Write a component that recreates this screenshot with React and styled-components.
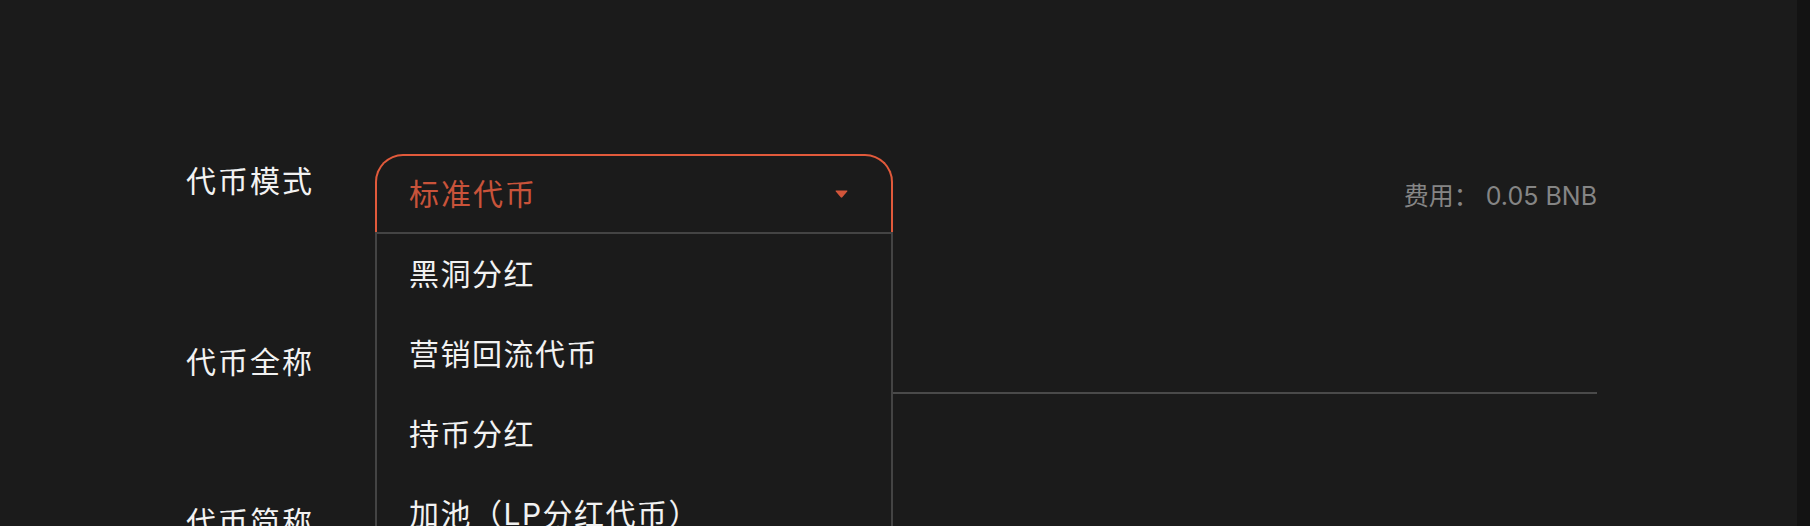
import styled, { createGlobalStyle } from "styled-components";

const GlobalStyle = createGlobalStyle`
  html, body {
    margin: 0;
    padding: 0;
    background: #1b1b1b;
    overflow: hidden;
  }
  body {
    font-family: "Inter", "Noto Sans CJK SC", sans-serif;
  }
`;

const Page = styled.div`
  display: flex;
  width: 1810px;
  height: 526px;
  overflow: hidden;
`;

const Main = styled.div`
  flex: 1;
  padding: 154px 0 0 186px;
  box-sizing: border-box;
`;

const ScrollTrack = styled.div`
  width: 13px;
  background: #131313;
`;

const Form = styled.div`
  width: 1411px;
  display: flex;
  flex-direction: column;
  gap: 101px;
`;

const Row = styled.div`
  display: flex;
  align-items: flex-start;
  height: ${(props) => props.height}px;
`;

const Label = styled.div`
  width: 189px;
  flex-shrink: 0;
  font-size: 30px;
  letter-spacing: 2px;
  line-height: 54px;
  color: #f2f2f2;
`;

const SelectWrap = styled.div`
  position: relative;
  width: 518px;
  flex-shrink: 0;
`;

const SelectBox = styled.div`
  height: 78px;
  box-sizing: border-box;
  border: 2px solid #e25a3b;
  border-bottom: none;
  border-radius: 28px 28px 0 0;
  padding: 0 43px 4px 32px;
  display: flex;
  align-items: center;
  justify-content: space-between;
  color: #c9533a;
  font-size: 30px;
  letter-spacing: 2px;

  svg {
    margin-top: 4px;
  }
`;

const Menu = styled.ul`
  position: absolute;
  top: 78px;
  left: 0;
  width: 518px;
  box-sizing: border-box;
  margin: 0;
  padding: 0;
  list-style: none;
  border: 2px solid #444;
  border-bottom: none;
  background: #1b1b1b;
  z-index: 2;
`;

const MenuItem = styled.li`
  height: 80px;
  box-sizing: border-box;
  padding: 0 0 4px 32px;
  display: flex;
  align-items: center;
  font-size: 30px;
  letter-spacing: 1.5px;
  color: #f2f2f2;
`;

const Fee = styled.div`
  margin-left: auto;
  height: 80px;
  display: flex;
  align-items: center;
  font-size: 25px;
  color: #858585;
`;

const Input = styled.div`
  flex: 1;
  height: 59px;
  box-sizing: border-box;
  border-bottom: 2px solid #4a4a4a;
`;

const Caret = () => (
  <svg width="13" height="8" viewBox="0 0 13 8">
    <path d="M1.2 0.4 H11.8 Q12.9 0.4 12.2 1.5 L7.3 7.3 Q6.5 8.1 5.7 7.3 L0.8 1.5 Q0.1 0.4 1.2 0.4 Z" fill="#d2553a" />
  </svg>
);

const options = ["黑洞分红", "营销回流代币", "持币分红", "加池（LP分红代币）"];

const App = () => {
  return (
    <Page>
      <GlobalStyle />
      <Main>
        <Form>
          <Row height={80}>
            <Label>代币模式</Label>
            <SelectWrap>
              <SelectBox>
                <span>标准代币</span>
                <Caret />
              </SelectBox>
              <Menu>
                {options.map((o) => (
                  <MenuItem key={o}>{o}</MenuItem>
                ))}
              </Menu>
            </SelectWrap>
            <Fee>费用：&nbsp;0.05 BNB</Fee>
          </Row>
          <Row height={59}>
            <Label>代币全称</Label>
            <Input />
          </Row>
          <Row height={80}>
            <Label>代币简称</Label>
            <Input />
          </Row>
        </Form>
      </Main>
      <ScrollTrack />
    </Page>
  );
};

export default App;
